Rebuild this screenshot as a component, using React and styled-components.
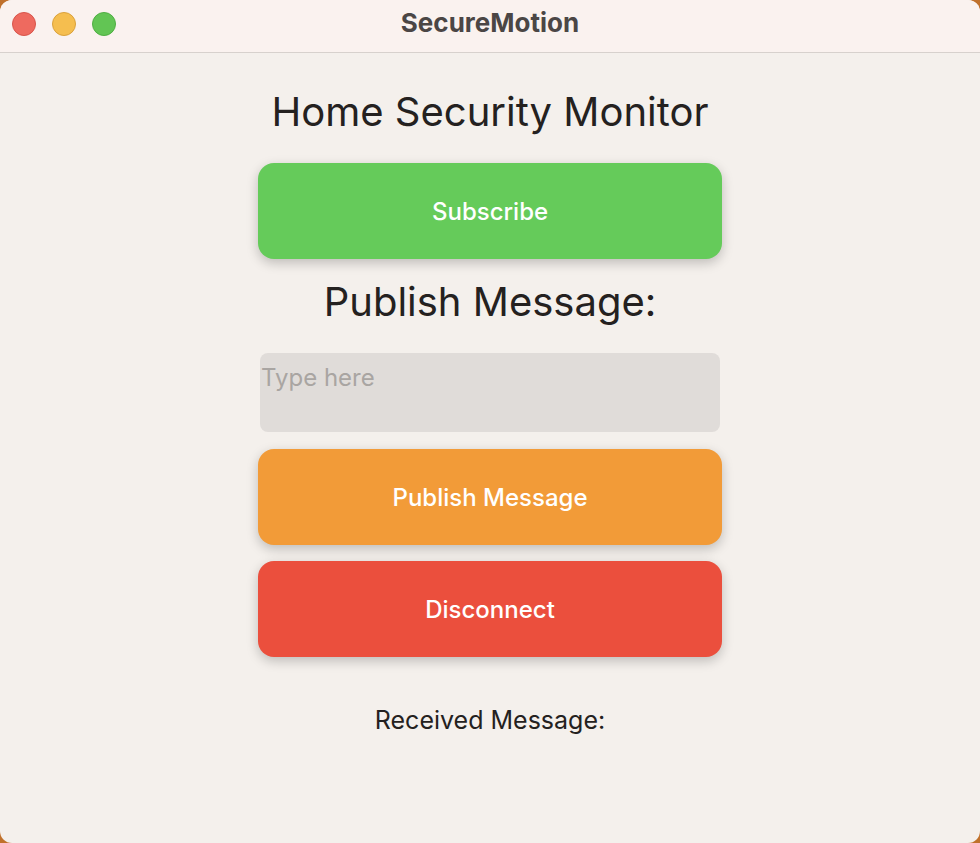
import React from 'react';
import styled, { createGlobalStyle } from 'styled-components';

const GlobalStyle = createGlobalStyle`
  html, body {
    margin: 0;
    padding: 0;
    background: #c0712c;
  }
  body {
    font-family: Inter, "Noto Sans", "Liberation Sans", sans-serif;
  }
`;

const Window = styled.div`
  width: 980px;
  height: 843px;
  border-radius: 12px;
  overflow: hidden;
  background: #f4f0ec;
  display: flex;
  flex-direction: column;
`;

const TitleBar = styled.div`
  height: 53px;
  flex-shrink: 0;
  display: flex;
  align-items: center;
  position: relative;
  background: #faf2ef;
  border-bottom: 1px solid #d7d1cd;
  box-sizing: border-box;
`;

const Lights = styled.div`
  display: flex;
  gap: 16px;
  padding-left: 12px;
  padding-bottom: 4px;
`;

const Light = styled.span`
  width: 24px;
  height: 24px;
  border-radius: 50%;
  box-sizing: border-box;
  background: ${(p) => p.color};
  border: 1px solid ${(p) => p.edge};
`;

const WindowTitle = styled.div`
  position: absolute;
  left: 0;
  right: 0;
  top: 0;
  bottom: 0;
  display: flex;
  align-items: center;
  justify-content: center;
  font-size: 26px;
  font-weight: 700;
  color: #4b4645;
  pointer-events: none;
  padding-bottom: 8px;
`;

const Content = styled.div`
  flex: 1;
  display: flex;
  flex-direction: column;
  align-items: center;
  padding-top: 33px;
`;

const Heading = styled.h1`
  margin: 0;
  margin-top: ${(p) => p.mt || 0}px;
  font-size: 40px;
  font-weight: 400;
  color: #242120;
  line-height: 52px;
`;

const Button = styled.button`
  width: 464px;
  height: 96px;
  border: none;
  border-radius: 16px;
  background: ${(p) => p.bg};
  color: #ffffff;
  font-family: inherit;
  font-size: 24px;
  font-weight: 500;
  box-shadow: 0 4px 12px rgba(0, 0, 0, 0.22);
  margin-top: ${(p) => p.mt}px;
  cursor: pointer;
`;

const Input = styled.textarea`
  width: 460px;
  height: 79px;
  box-sizing: border-box;
  margin-top: 25px;
  border: none;
  border-radius: 8px;
  background: #e0dcd9;
  padding: 10px 0 0 1px;
  font-family: inherit;
  font-size: 24px;
  color: #242120;
  resize: none;
  outline: none;

  &::placeholder {
    color: #a9a5a2;
  }
`;

const Received = styled.div`
  margin-top: 48px;
  font-size: 25px;
  color: #242120;
`;

const App = () => (
  <>
    <GlobalStyle />
    <Window>
      <TitleBar>
        <Lights>
          <Light color="#ee6a5f" edge="#d7554b" />
          <Light color="#f5be4f" edge="#d9a13c" />
          <Light color="#62c554" edge="#4fae43" />
        </Lights>
        <WindowTitle>SecureMotion</WindowTitle>
      </TitleBar>
      <Content>
        <Heading>Home Security Monitor</Heading>
        <Button bg="#65cb5a" mt={25}>Subscribe</Button>
        <Heading mt={17}>Publish Message:</Heading>
        <Input placeholder="Type here" />
        <Button bg="#f29b38" mt={17}>Publish Message</Button>
        <Button bg="#eb4f3d" mt={16}>Disconnect</Button>
        <Received>Received Message:</Received>
      </Content>
    </Window>
  </>
);

export default App;
